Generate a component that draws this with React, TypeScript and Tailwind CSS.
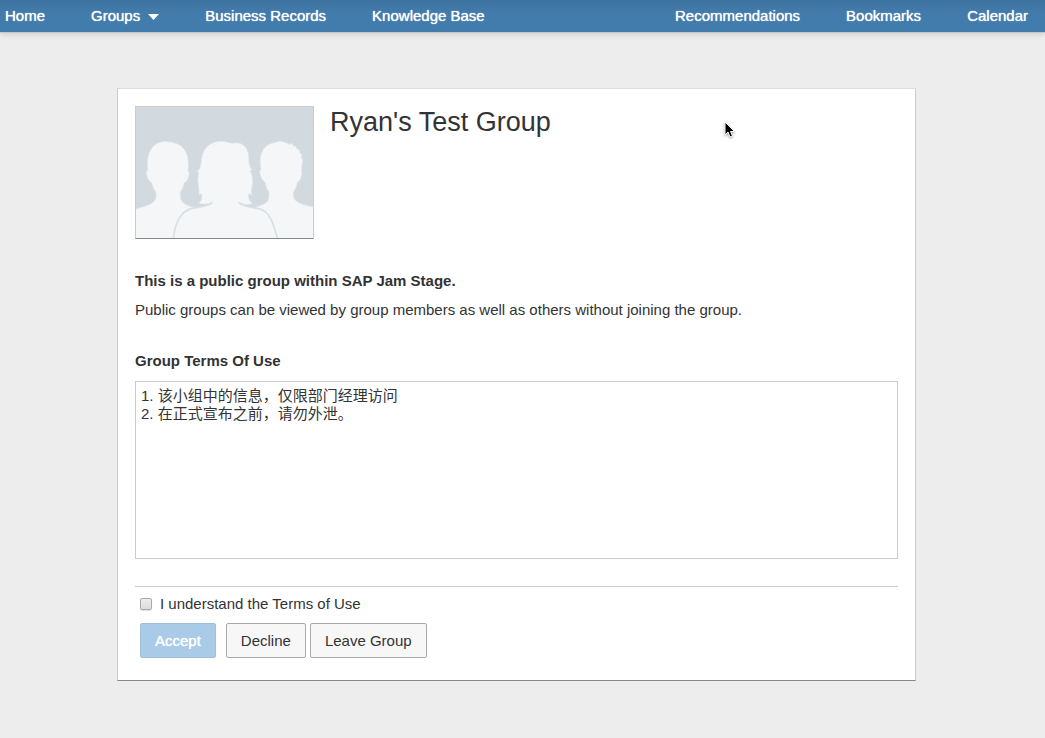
import { useState } from "react";

const primaryLinks = ["Business Records", "Knowledge Base"];
const secondaryLinks = ["Recommendations", "Bookmarks", "Calendar"];

const TERMS = "1. 该小组中的信息，仅限部门经理访问\n2. 在正式宣布之前，请勿外泄。";

function NavBar() {
  return (
    <nav className="flex h-8 items-center justify-between bg-linear-to-b from-[#3e72a0] to-[#427cac] to-40% pr-[17px] pl-[5px] text-[15px] leading-8 whitespace-nowrap text-white shadow-[0_1px_0_#c8c8c8,0_2px_6px_#00000026] [text-shadow:0_0_1px_#ffffff]">
      <div className="flex gap-[46px]">
        <a href="#home">Home</a>
        <button type="button" className="flex items-center gap-2 [text-shadow:0_0_1px_#ffffff]">
          Groups
          <svg className="mt-px" width="11" height="6" viewBox="0 0 11 6" aria-hidden="true">
            <path d="M0 0H11L5.5 6Z" fill="#ffffff" />
          </svg>
        </button>
        {primaryLinks.map((label) => (
          <a key={label} href="#nav">
            {label}
          </a>
        ))}
      </div>
      <div className="flex gap-[46px]">
        {secondaryLinks.map((label) => (
          <a key={label} href="#nav">
            {label}
          </a>
        ))}
      </div>
    </nav>
  );
}

function GroupAvatar() {
  return (
    <div className="h-[133px] w-[179px] shrink-0 border border-[#cccccc] border-b-[#888888] bg-[#d2d9df]">
      <svg className="block h-full w-full" viewBox="78 81 531 393" preserveAspectRatio="none" role="img" aria-label="Group">
        <g fill="#f4f6f8" stroke="#e3e8ec" strokeWidth="2">
          <path d="M70 390C95 380 137 375 138 352V336C130 327 128 318 126 309C116 304 110 291 109 277L113 271C108 220 126 194 150 187L163 184L178 186C219 190 240 215 234 273L238 278C236 294 231 306 222 308C220 320 217 329 211 335V351C213 374 235 376 250 382V480H70Z" />
          <path d="M436 382C456 374 477 371 477 350V335C470 326 467 316 466 307C456 302 450 288 449 274L453 268C445 218 461 194 493 188L510 183L527 188L540 194L544 189L550 198L558 199L560 206L568 210L570 220L576 224L574 232L578 240L574 272L576 278C574 292 571 303 562 307C559 322 555 330 550 336V347C554 373 587 374 620 384V480H436Z" />
        </g>
        <path
          d="M190 478C193 438 209 394 245 385C272 380 293 380 308 367C297 373 279 374 266 369C276 363 277 352 275 341L267 343C268 330 266 318 264 306C263 292 265 284 267 277L260 275C270 270 273 256 275 236C280 200 305 183 337 184C350 185 356 190 367 190C397 184 415 201 416 231C417 250 417 264 427 269L420 273C427 285 430 300 426 319C424 331 422 340 427 346L416 341C414 354 417 363 428 370C412 376 397 374 386 367C400 380 422 381 446 386C482 393 492 438 503 478Z"
          fill="#f4f6f8"
          stroke="#e3e8ec"
          strokeWidth="2"
        />
        <path d="M190 478C193 438 209 394 245 385C272 380 293 380 308 367M386 367C400 380 422 381 446 386C482 393 492 438 503 478" fill="none" stroke="#d8e0e5" strokeWidth="5" />
      </svg>
    </div>
  );
}

function Pointer() {
  return (
    <svg className="absolute top-8 left-[606px] drop-shadow-[0_1px_1px_#00000066]" width="12" height="18" viewBox="0 0 12 18" aria-hidden="true">
      <path d="M1 1V14L4 11L6 16L8.500 15L6.500 10.500H10.500Z" fill="#000000" stroke="#ffffff" strokeWidth="1" />
    </svg>
  );
}

export default function App() {
  const [agreed, setAgreed] = useState(false);
  const [terms, setTerms] = useState(TERMS);

  return (
    <div className="min-h-screen bg-[#ededed] font-['Liberation_Sans','Noto_Sans_CJK_SC',sans-serif] text-[15px] text-[#333333]">
      <NavBar />
      <main className="relative mt-14 mr-[129px] ml-[117px] border border-[#cccccc] border-t-[#dddddd] border-b-[#888888] bg-white px-[17px] pt-[17px] pb-[22px]">
        <header className="flex gap-4">
          <GroupAvatar />
          <h1 className="text-[27px] leading-8">Ryan's Test Group</h1>
        </header>
        <Pointer />

        <h2 className="mt-8 leading-5 font-bold">This is a public group within SAP Jam Stage.</h2>
        <p className="mt-2 leading-[22px]">Public groups can be viewed by group members as well as others without joining the group.</p>

        <label htmlFor="terms" className="mt-7 block leading-6 font-bold">
          Group Terms Of Use
        </label>
        <textarea
          id="terms"
          value={terms}
          onChange={(event) => setTerms(event.target.value)}
          className="mt-2 block h-[178px] w-full resize-none border border-[#cccccc] px-[5px] py-[5px] leading-[18px] outline-none"
        />

        <div className="mt-[27px] border-t border-[#cccccc] px-[5px] pt-[7px]">
          <label className="flex items-center gap-2 leading-5">
            <input
              type="checkbox"
              checked={agreed}
              onChange={(event) => setAgreed(event.target.checked)}
              className="h-3 w-3 appearance-none rounded-xs border border-[#aaaaaa] bg-linear-to-b from-[#ededed] to-[#dcdcdc] shadow-[0_1px_1px_#00000022] checked:bg-[#427cac]"
            />
            I understand the Terms of Use
          </label>
          <div className="mt-[9px] flex leading-[33px]">
            <button
              type="button"
              disabled={!agreed}
              className="mr-[10px] rounded-xs border border-[#9fc0dc] bg-[#a9cbe7] px-[14px] text-white [text-shadow:0_0_1px_#ffffff]"
            >
              Accept
            </button>
            <button type="button" className="mr-1 rounded-xs border border-[#aaaaaa] bg-[#f7f7f7] px-[14px]">
              Decline
            </button>
            <button type="button" className="rounded-xs border border-[#aaaaaa] bg-[#f7f7f7] px-[14px]">
              Leave Group
            </button>
          </div>
        </div>
      </main>
    </div>
  );
}
